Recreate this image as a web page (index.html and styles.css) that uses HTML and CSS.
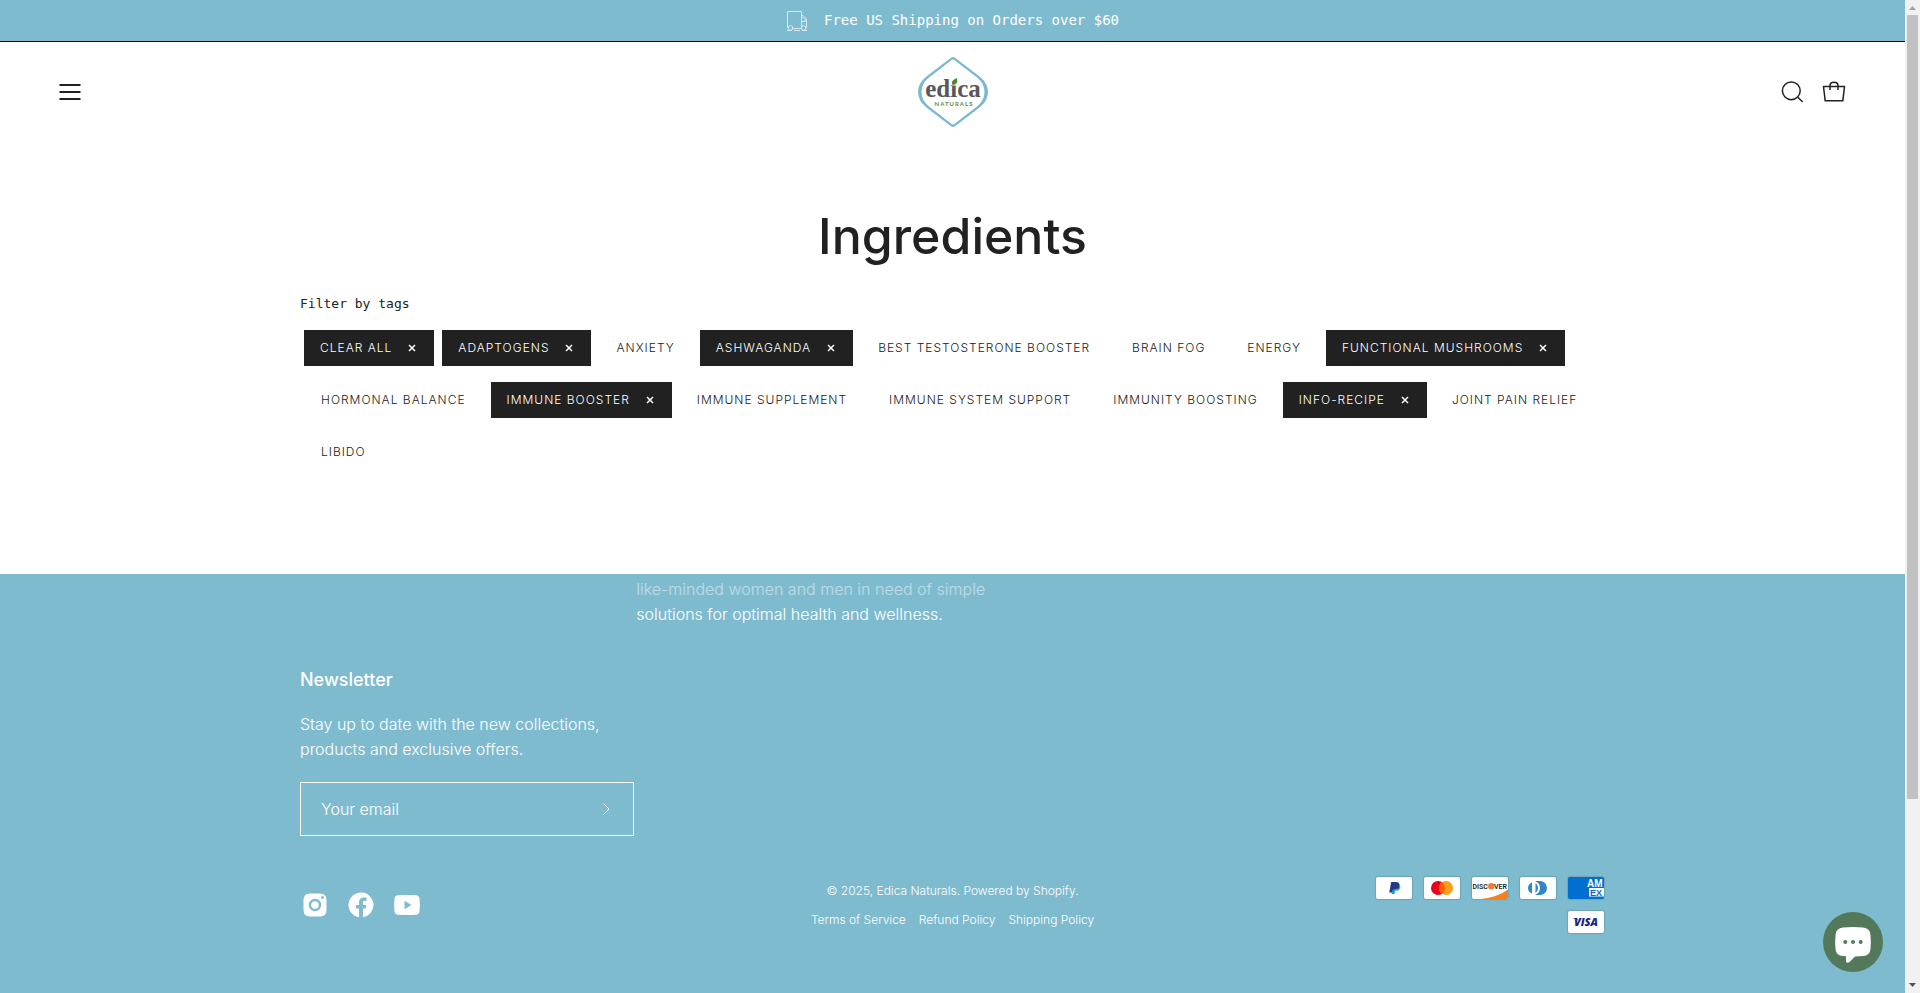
FILE: index.html
```html
<!DOCTYPE html>
<html lang="en">
<head>
<meta charset="utf-8">
<meta name="viewport" content="width=device-width, initial-scale=1">
<title>Ingredients – Edica Naturals</title>
<link rel="stylesheet" href="styles.css">
</head>
<body>
<div class="window">
<div class="page">
  <div class="announcement">
    <svg class="truck" viewBox="0 0 22 22" fill="none" stroke="currentColor" aria-hidden="true"><path d="M2.500 17.500H1.500V1.500H15.500V17.500M15.500 5.500H17L20.500 9V17.500H19.500M15.500 18.500H6.500M15.500 7.500V11.500H19.500M19 11.500V9.500L17 7.500H15.500M1 20.500H6M8 20.500H14M16 20.500H21"/><circle cx="4.500" cy="18" r="2.300"/><circle cx="17.500" cy="18" r="2.300"/></svg>
    <span>Free US Shipping on Orders over $60</span>
  </div>
  <header class="header">
    <button class="icon-button" aria-label="Menu"><svg width="24" height="24" viewBox="0 0 24 24" fill="none" stroke="currentColor" stroke-width="2"><path d="M.5 5H21.500M.5 12H21.500M.5 19H21.500"/></svg></button>
    <a class="logo" href="#" aria-label="Edica Naturals">
      <svg width="70" height="70" viewBox="0 0 70 70"><path fill="#7cb8d0" fill-rule="evenodd" d="M33 .8Q35-.7 37 .8L61 19Q70 26 70 35T61 51L37 69.200Q35 70.700 33 69.200L9 51Q0 44 0 35T9 19ZM34 2.800L11 20.500Q3.500 26.500 3.500 35T11 49.500L34 67.200Q35 68 36 67.200L59 49.500Q66.500 43.500 66.500 35T59 20.500L36 2.800Q35 2 34 2.800Z"/><text class="logo-name" x="35" y="40" text-anchor="middle">edica</text><path fill="#fff" d="M33.500 22H40V28.500H33.500Z"/><path fill="#548235" d="M34.500 28Q32 23.500 39 21Q40.500 28 34.500 28"/><text class="logo-sub" x="36" y="49" text-anchor="middle">NATURALS</text></svg>
    </a>
    <div class="header-tools">
      <button class="icon-button" aria-label="Search"><svg width="24" height="24" viewBox="0 0 24 24" fill="none" stroke="currentColor" stroke-width="1.500"><circle cx="11.300" cy="10.800" r="8.900"/><path d="M17.500 17L22.700 22"/></svg></button>
      <button class="icon-button" aria-label="Cart"><svg width="24" height="24" viewBox="0 0 24 24" fill="none" stroke="currentColor" stroke-width="1.500" stroke-linejoin="round"><path d="M1.500 6.500H22.500L20.800 20.800H3.200ZM8 10V5.500Q8 2.200 12 2.200T16 5.500V10"/></svg></button>
    </div>
  </header>
  <main class="content">
    <h1>Ingredients</h1>
    <p class="filter-label">Filter by tags</p>
    <ul class="tags">
      <li><a class="tag active" href="#">Clear all<svg class="cross" viewBox="0 0 8 8"><path d="M1 1L7 7M7 1L1 7"/></svg></a></li>
      <li><a class="tag active" href="#">Adaptogens<svg class="cross" viewBox="0 0 8 8"><path d="M1 1L7 7M7 1L1 7"/></svg></a></li>
      <li><a class="tag" href="#">Anxiety</a></li>
      <li><a class="tag active" href="#">Ashwaganda<svg class="cross" viewBox="0 0 8 8"><path d="M1 1L7 7M7 1L1 7"/></svg></a></li>
      <li><a class="tag" href="#">Best Testosterone Booster</a></li>
      <li><a class="tag" href="#">Brain Fog</a></li>
      <li><a class="tag" href="#">Energy</a></li>
      <li><a class="tag active" href="#">Functional Mushrooms<svg class="cross" viewBox="0 0 8 8"><path d="M1 1L7 7M7 1L1 7"/></svg></a></li>
      <li><a class="tag" href="#">Hormonal Balance</a></li>
      <li><a class="tag active" href="#">Immune Booster<svg class="cross" viewBox="0 0 8 8"><path d="M1 1L7 7M7 1L1 7"/></svg></a></li>
      <li><a class="tag" href="#">Immune Supplement</a></li>
      <li><a class="tag" href="#">Immune System Support</a></li>
      <li><a class="tag" href="#">Immunity Boosting</a></li>
      <li><a class="tag active" href="#">Info-Recipe<svg class="cross" viewBox="0 0 8 8"><path d="M1 1L7 7M7 1L1 7"/></svg></a></li>
      <li><a class="tag" href="#">Joint Pain Relief</a></li>
      <li><a class="tag" href="#">Libido</a></li>
    </ul>
  </main>
  <footer class="footer">
    <div class="footer-inner">
      <div class="footer-columns">
        <p class="about"><span class="faded">like-minded women and men in need of simple</span><br>solutions for optimal health and wellness.</p>
        <form class="newsletter">
          <h2>Newsletter</h2>
          <p>Stay up to date with the new collections, products and exclusive offers.</p>
          <div class="field">
            <input type="email" placeholder="Your email" aria-label="Your email">
            <button type="button" aria-label="Subscribe"><svg width="12" height="12" viewBox="0 0 12 12" fill="none" stroke="currentColor"><path d="M3.500 .5L9 6L3.500 11.500"/></svg></button>
          </div>
        </form>
      </div>
      <div class="footer-bottom">
        <div class="social">
          <a href="#" aria-label="Instagram"><svg width="30" height="30" viewBox="0 0 30 30"><path fill="currentColor" fill-rule="evenodd" d="M10 3.500H20Q26.500 3.500 26.500 10V20Q26.500 26.500 20 26.500H10Q3.500 26.500 3.500 20V10Q3.500 3.500 10 3.500ZM15 8.800A6.200 6.200 0 1 0 15 21.200A6.200 6.200 0 1 0 15 8.800ZM15 11.200A3.800 3.800 0 1 1 15 18.800A3.800 3.800 0 1 1 15 11.200ZM22.500 6A1.500 1.500 0 1 0 22.500 9A1.500 1.500 0 1 0 22.500 6Z"/></svg></a>
          <a href="#" aria-label="Facebook"><svg width="30" height="30" viewBox="0 0 24 24"><path fill="currentColor" d="M22 12a10 10 0 1 0-11.560 9.880v-6.990H7.900V12h2.540V9.800c0-2.510 1.490-3.890 3.780-3.890 1.090 0 2.240.190 2.240.190v2.460H15.200c-1.240 0-1.630.770-1.630 1.560V12h2.770l-.440 2.890h-2.330v6.990A10 10 0 0 0 22 12Z"/></svg></a>
          <a href="#" aria-label="YouTube"><svg width="30" height="30" viewBox="0 0 30 30"><path fill="currentColor" fill-rule="evenodd" d="M6 5.300Q15 4.500 24 5.300Q27 5.500 27.500 8.500Q28.200 15 27.500 21.500Q27 24.500 24 24.700Q15 25.500 6 24.700Q3 24.500 2.500 21.500Q1.800 15 2.500 8.500Q3 5.500 6 5.300ZM12.500 10.800V19.200L19.500 15Z"/></svg></a>
        </div>
        <div class="legal">
          <p>© 2025, <a href="#">Edica Naturals</a>. <a href="#">Powered by Shopify</a>.</p>
          <nav><a href="#">Terms of Service</a><a href="#">Refund Policy</a><a href="#">Shipping Policy</a></nav>
        </div>
        <div class="payments">
          <svg class="card" viewBox="0 0 36 22" role="img" aria-label="PayPal"><path fill="#253b80" d="M15.200 5H20Q24 5.300 23.500 9Q22.800 12.800 18.500 12.800H17.300L16.600 15.500H13.200Z"/><path fill="#179bd7" d="M23.600 7.800Q25 9 24 11.500Q23 13.800 20 13.800H19L18.400 17H15.500L16.500 13H18.500Q23 12.800 23.600 7.800Z"/></svg>
          <svg class="card" viewBox="0 0 36 22" role="img" aria-label="Mastercard"><circle cx="14" cy="11" r="7" fill="#eb001b"/><circle cx="22" cy="11" r="7" fill="#f79e1b"/><path fill="#ff5f00" d="M18 5.300A7 7 0 0 1 18 16.700A7 7 0 0 1 18 5.300Z"/></svg>
          <svg class="card" viewBox="0 0 36 22" role="img" aria-label="Discover"><path fill="#f48120" d="M9 22Q26 20 36 12.500V22Z"/><text class="discover" x="0.500" y="11.900">DISC</text><circle cx="19.300" cy="9.200" r="3.200" fill="#f47b2c"/><text class="discover" x="22" y="11.900">VER</text></svg>
          <svg class="card" viewBox="0 0 36 22" role="img" aria-label="Diners Club"><path fill="#3086c8" d="M15 4H20A7 7 0 0 1 20 18H15Q20 16 20 11T15 4Z"/><path fill="#3086c8" d="M12 5.500V16.500Q8 15 8 11T12 5.500ZM15.500 6V16Q18 14.500 18 11T15.500 6Z"/></svg>
          <svg class="card amex" viewBox="0 0 36 22" role="img" aria-label="American Express"><text class="amex-top" x="19" y="10.300">AM</text><path fill="#fff" d="M21 11H36V19.600H21Z"/><text class="amex-bottom" x="22" y="18.600">EX</text></svg>
          <svg class="card" viewBox="0 0 36 22" role="img" aria-label="Visa"><text class="visa" x="18" y="15" text-anchor="middle">VISA</text><path fill="#142688" d="M5 7H9L10 9.500Q8 7.500 5 7.300Z"/></svg>
        </div>
      </div>
    </div>
  </footer>
  <button class="chat" aria-label="Chat"><svg width="60" height="60" viewBox="0 0 60 60"><path fill="#fff" d="M20 15.500Q30 14.500 40 15.500Q47 16 47.500 23Q48.200 30 47.500 37Q47 43.500 40 44Q36 44.300 32 44.500L26.500 50Q23 52 23 48.500V44.300L20 44Q13 43.500 12.500 37Q11.800 30 12.500 23Q13 16 20 15.500Z"/><g fill="#53795a"><circle cx="22.300" cy="30" r="2"/><circle cx="30" cy="30" r="2"/><circle cx="37.700" cy="30" r="2"/></g></svg></button>
</div>
<div class="scrollbar" aria-hidden="true">
  <svg width="15" height="15" viewBox="0 0 15 15"><path fill="#a3a3a3" d="M4 10L7.500 6L11 10Z"/></svg>
  <div class="scroll-track"><div class="scroll-thumb"></div></div>
  <svg width="15" height="15" viewBox="0 0 15 15"><path fill="#505050" d="M4 5H11L7.500 9Z"/></svg>
</div>
</div>
</body>
</html>
```
FILE: styles.css
```css
* { box-sizing: border-box; }
body {
  margin: 0;
  color: #212121;
  background: #fff;
  font-family: Inter, sans-serif;
  font-size: 16px;
  font-weight: 300;
  line-height: 25px;
}
a { color: inherit; text-decoration: none; }
button { padding: 0; border: 0; color: inherit; background: none; cursor: pointer; }
svg { display: block; }
h1, h2, p, ul { margin: 0; padding: 0; }

.window { display: flex; height: 100vh; }
.page { flex: 1; min-width: 0; display: flex; flex-direction: column; overflow: hidden; }

.announcement {
  display: flex;
  justify-content: center;
  align-items: center;
  gap: 16px;
  height: 42px;
  border-bottom: 1px solid #000;
  color: #fff;
  background: #7ebbcf;
  font-family: "DejaVu Sans Mono", monospace;
  font-size: 14px;
  font-weight: 400;
}
.truck { width: 22px; height: 22px; stroke-width: 1; opacity: .7; }

.header {
  display: grid;
  grid-template-columns: 1fr auto 1fr;
  align-items: center;
  height: 100px;
  padding: 0 59px;
}
.header-tools { display: flex; justify-content: flex-end; gap: 18px; }
.logo-name { fill: #58585b; font: bold 25px "Liberation Serif", serif; }
.logo-sub { fill: #5e8c3a; font: bold 6px Lato, sans-serif; letter-spacing: 1px; }

.content { width: 100%; max-width: 1305px; margin: 0 auto; padding: 64px 0 104px; }
h1 {
  text-align: center;
  font-size: 50px;
  line-height: 60px;
  font-weight: 500;
}
.filter-label {
  margin: 25px 0 13px;
  font-family: "DejaVu Sans Mono", monospace;
  font-size: 13px;
  font-weight: 400;
  line-height: 26px;
}
.tags { display: flex; flex-wrap: wrap; gap: 16px 8px; padding-left: 4px; list-style: none; }
.tag {
  display: flex;
  align-items: center;
  height: 36px;
  padding: 0 17px;
  font-size: 12px;
  font-weight: 350;
  line-height: 18px;
  letter-spacing: 1px;
  text-transform: uppercase;
}
.tag.active { padding: 0 16px; color: #fff; background: #212121; }
.cross { width: 8px; height: 8px; margin: 0 2px 0 16px; fill: none; stroke: #fff; stroke-width: 1.5; }

.footer { flex: 1; color: #fff; background: #7ebbcf; }
.footer-inner { max-width: 1305px; margin: 0 auto; padding-top: 3px; }
.footer-columns { display: grid; grid-template-columns: repeat(12, 1fr); row-gap: 40px; }
.about { grid-column: 4 / 8; padding-left: 10px; }
.faded { opacity: .5; }
.newsletter { grid-column: 1 / 4; grid-row: 2; margin-right: -8px; }
.newsletter h2 { margin-bottom: 19px; font-size: 18px; line-height: 26px; font-weight: 500; }
.field { display: flex; height: 54px; margin-top: 20px; border: 1px solid #fff; }
.field input {
  flex: 1;
  min-width: 0;
  padding: 0 20px;
  border: 0;
  outline: 0;
  color: #fff;
  background: none;
  font: inherit;
}
.field input::placeholder { color: #fff; opacity: 1; }
.field button { width: 54px; display: grid; place-items: center; }

.footer-bottom { display: grid; grid-template-columns: 1fr auto 1fr; align-items: center; margin-top: 40px; }
.social { display: flex; gap: 16px; }
.legal { text-align: center; font-size: 12px; line-height: 29px; }
.legal nav { display: flex; justify-content: center; gap: 13px; }
.payments { display: flex; flex-wrap: wrap; justify-content: flex-end; gap: 12px; width: 240px; margin-left: auto; padding-right: 1px; }
.card { width: 36px; height: 22px; border-radius: 2px; background: #fff; box-shadow: 0 0 1px 1px #6fa6b8; }
.amex { background: #006fcf; }
.discover { fill: #231f20; font: 600 7px Roboto, sans-serif; }
.amex-top { fill: #fff; font: bold 10px "Liberation Sans", sans-serif; }
.amex-bottom { fill: #006fcf; font: bold 9px "Liberation Sans", sans-serif; }
.visa { fill: #142688; font: italic 900 11px "Open Sans", sans-serif; }

.chat {
  position: fixed;
  right: 37px;
  bottom: 21px;
  border-radius: 50%;
  background: #53795a;
}

.scrollbar { width: 15px; display: flex; flex-direction: column; background: #f1f1f1; }
.scroll-track { flex: 1; padding: 0 2px; }
.scroll-thumb { height: 784px; max-height: 100%; background: #c1c1c1; }
```
